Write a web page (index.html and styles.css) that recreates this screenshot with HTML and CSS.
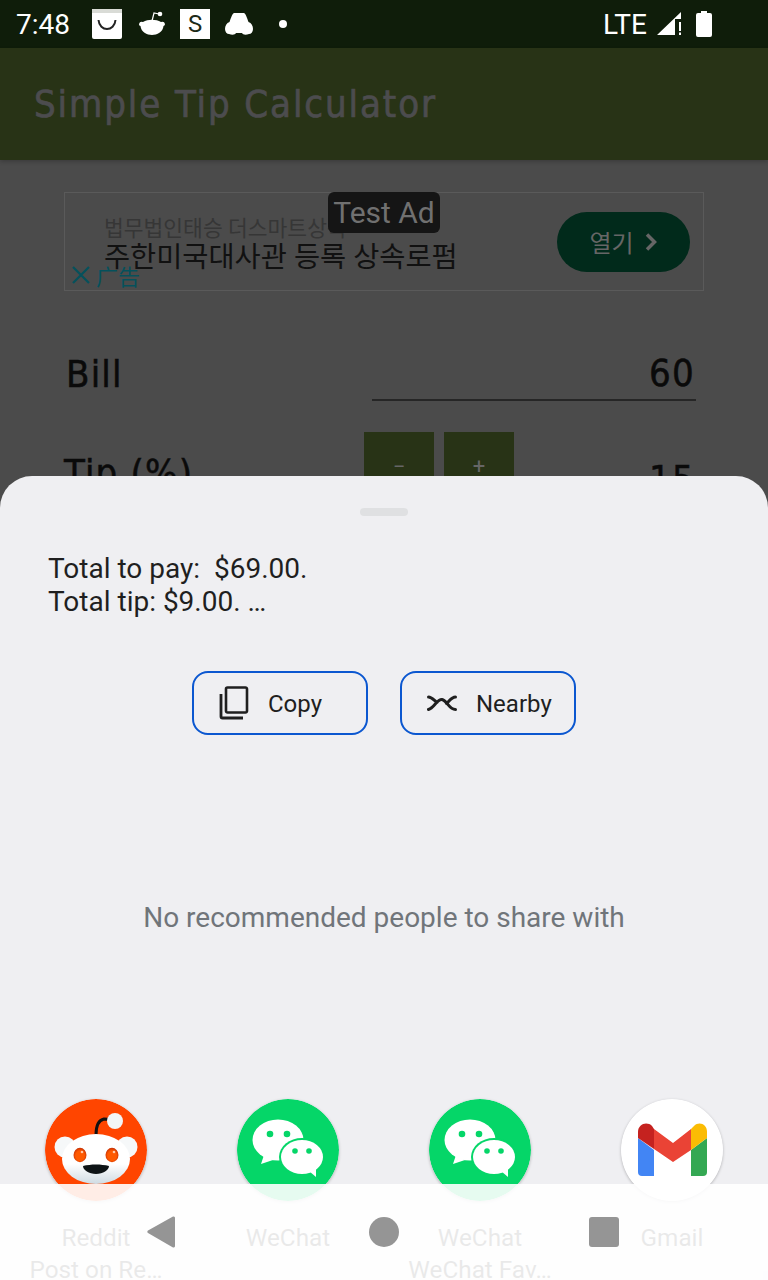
FILE: index.html
```html
<!DOCTYPE html>
<html lang="en">
<head>
  <meta charset="UTF-8">
  <meta name="viewport" content="width=device-width, initial-scale=1.0">
  <title>Simple Tip Calculator</title>
  <link rel="stylesheet" href="styles.css">
</head>
<body>
<div class="screen">

  <div class="status-bar">
    <span class="time">7:48</span>
    <svg class="note-icon" width="30" height="30" viewBox="0 0 30 30">
      <rect width="30" height="30" rx="2" fill="#fff"/>
      <rect width="30" height="4" fill="#d9dbd6"/>
      <path d="M6.500 11c1 12 16 12 17 0" fill="none" stroke="#222" stroke-width="2"/>
    </svg>
    <svg class="note-icon reddit-note" width="28" height="30" viewBox="0 0 28 30">
      <path d="M14 12l2-8 5 1" fill="none" stroke="#fff" stroke-width="1.2"/>
      <circle cx="22" cy="5" r="2.3" fill="#fff"/>
      <path d="M1 15a3 3 0 0 1 4-2c5-3 13-3 18 0a3 3 0 0 1 4 2c0 1-1 2-1.500 2C25 23 19 26 14 26S3 23 2.500 17C1.500 17 1 16 1 15z" fill="#fff"/>
    </svg>
    <span class="s-icon">S</span>
    <svg class="note-icon car-note" width="28" height="24" viewBox="0 0 28 24">
      <path d="M9 1h10c2 1 3 5 4.500 9 3 1 4.500 4 4.500 7 0 3-2 5-4 5-3 1-6 1-7-1h-6c-1 2-4 2-7 1-2 0-4-2-4-5 0-3 1.500-6 4.500-7C6 6 7 2 9 1z" fill="#fff"/>
    </svg>
    <span class="dot"></span>
    <span class="lte">LTE</span>
    <svg class="signal" width="26" height="26" viewBox="0 0 26 26">
      <path d="M0 24L24 1V8H18V24z" fill="#fff"/>
      <path d="M22 11h2v9h-2zM22 21.500h2V24h-2z" fill="#fff"/>
    </svg>
    <svg class="battery" width="16" height="26" viewBox="0 0 16 26">
      <path d="M5 0h6v2h3a2 2 0 0 1 2 2v20a2 2 0 0 1-2 2H2a2 2 0 0 1-2-2V4a2 2 0 0 1 2-2h3z" fill="#fff"/>
    </svg>
  </div>

  <div class="app-bar">Simple Tip Calculator</div>

  <div class="content">
    <div class="ad">
      <div class="ad-text">
        <div class="ad-sub">법무법인태승 더스마트상속</div>
        <div class="ad-title">주한미국대사관 등록 상속로펌</div>
      </div>
      <div class="ad-open">열기
        <svg width="14" height="20" viewBox="0 0 14 20"><path d="M3 2.500L10.500 10 3 17.500" fill="none" stroke="#666" stroke-width="3.500"/></svg>
      </div>
      <span class="ad-badge">Test Ad</span>
      <div class="ad-choice">
        <svg width="18" height="18" viewBox="0 0 18 18"><path d="M1 1l16 16M17 1L1 17" stroke="#05515c" stroke-width="2.200"/></svg>
        <span>广告</span>
      </div>
    </div>

    <div class="row-bill">
      <span class="field-label">Bill</span>
      <span class="field-input">60</span>
    </div>

    <div class="row-tip">
      <span class="field-label tip-label">Tip (%)</span>
      <span class="step-btn">−</span>
      <span class="step-btn">+</span>
      <span class="tip-value">15</span>
    </div>
  </div>

  <div class="sheet">
    <div class="handle"></div>
    <p class="share-text">Total to pay:&nbsp; $69.00.<br>Total tip: $9.00. …</p>

    <div class="actions">
      <div class="action-btn">
        <svg width="30" height="34" viewBox="0 0 30 34">
          <path d="M8.500 1.500h18a1.500 1.500 0 0 1 1.500 1.500v22a1.500 1.500 0 0 1-1.500 1.500h-18A1.500 1.500 0 0 1 7 25V3a1.500 1.500 0 0 1 1.500-1.500z" fill="none" stroke="#1f1f1f" stroke-width="2.600"/>
          <path d="M2 8v22.500A1.500 1.500 0 0 0 3.500 32H24" fill="none" stroke="#1f1f1f" stroke-width="2.800"/>
        </svg>
        <span>Copy</span>
      </div>
      <div class="action-btn">
        <svg width="30" height="18" viewBox="0 0 30 18">
          <path d="M1.500 3C5 3 7 6.500 10 8.500M1.500 15.500C7 14 10 5 15 5.500 20 6.500 22 15.500 28.500 15.500M19.500 9.500C22 8 24 3 28.500 3" fill="none" stroke="#1f1f1f" stroke-width="3" stroke-linecap="round"/>
        </svg>
        <span>Nearby</span>
      </div>
    </div>

    <div class="empty-note">No recommended people to share with</div>

    <div class="targets">
      <div class="target">
        <svg class="target-icon" width="102" height="102" viewBox="0 0 102 102">
          <defs>
            <linearGradient id="faceShade" x1="0" y1="0" x2="0" y2="1">
              <stop offset="0.6" stop-color="#fff"/>
              <stop offset="1" stop-color="#cfdbe2"/>
            </linearGradient>
            <radialGradient id="eyeGlow" cx="0.5" cy="0.55" r="0.6">
              <stop offset="0.55" stop-color="#ff5a00"/>
              <stop offset="1" stop-color="#b92505"/>
            </radialGradient>
          </defs>
          <circle cx="51" cy="51" r="51" fill="#ff4500"/>
          <path d="M51 36c0-9 3-15 8-16 2 0 4 0 5 1" fill="none" stroke="#111" stroke-width="3"/>
          <circle cx="70" cy="22" r="8" fill="#f3f5f7"/>
          <circle cx="20" cy="48" r="10.500" fill="#f6f8f9"/>
          <circle cx="82" cy="48" r="10.500" fill="#f6f8f9"/>
          <ellipse cx="51" cy="60" rx="34" ry="25" fill="url(#faceShade)"/>
          <ellipse cx="35" cy="56" rx="6.500" ry="7.200" fill="url(#eyeGlow)"/>
          <ellipse cx="67" cy="56" rx="6.500" ry="7.200" fill="url(#eyeGlow)"/>
          <circle cx="37" cy="53" r="1.300" fill="#ffc9a8"/>
          <circle cx="69" cy="53" r="1.300" fill="#ffc9a8"/>
          <path d="M38 67c8-2 18-2 26 0 0 4-6 8-13 8s-13-4-13-8z" fill="#0e1416"/>
        </svg>
        <span class="target-name">Reddit</span>
        <span class="target-name">Post on Re…</span>
      </div>
      <div class="target">
        <svg class="target-icon" width="102" height="102" viewBox="0 0 102 102">
          <circle cx="51" cy="51" r="51" fill="#05d668"/>
          <ellipse cx="41" cy="41" rx="25.500" ry="20.500" fill="#fff"/>
          <path d="M27 56l-3 9 12-4z" fill="#fff"/>
          <ellipse cx="65" cy="58" rx="23" ry="19" fill="#05d668"/>
          <ellipse cx="65" cy="58" rx="21" ry="17" fill="#fff"/>
          <path d="M72 72l7 6v-9z" fill="#fff"/>
          <circle cx="33" cy="35" r="3.300" fill="#05d668"/>
          <circle cx="50" cy="35" r="3.300" fill="#05d668"/>
          <circle cx="58" cy="52" r="2.800" fill="#05d668"/>
          <circle cx="72" cy="52" r="2.800" fill="#05d668"/>
        </svg>
        <span class="target-name">WeChat</span>
      </div>
      <div class="target">
        <svg class="target-icon" width="102" height="102" viewBox="0 0 102 102">
          <circle cx="51" cy="51" r="51" fill="#05d668"/>
          <ellipse cx="41" cy="41" rx="25.500" ry="20.500" fill="#fff"/>
          <path d="M27 56l-3 9 12-4z" fill="#fff"/>
          <ellipse cx="65" cy="58" rx="23" ry="19" fill="#05d668"/>
          <ellipse cx="65" cy="58" rx="21" ry="17" fill="#fff"/>
          <path d="M72 72l7 6v-9z" fill="#fff"/>
          <circle cx="33" cy="35" r="3.300" fill="#05d668"/>
          <circle cx="50" cy="35" r="3.300" fill="#05d668"/>
          <circle cx="58" cy="52" r="2.800" fill="#05d668"/>
          <circle cx="72" cy="52" r="2.800" fill="#05d668"/>
        </svg>
        <span class="target-name">WeChat</span>
        <span class="target-name">WeChat Fav…</span>
      </div>
      <div class="target">
        <svg class="target-icon" width="102" height="102" viewBox="0 0 102 102">
          <circle cx="51" cy="51" r="51" fill="#fff"/>
          <path d="M17 39l16 12v26H21a4 4 0 0 1-4-4z" fill="#4285f4"/>
          <path d="M70 51l16-12v34a4 4 0 0 1-4 4H70z" fill="#34a853"/>
          <path d="M33 30l19 14 18-14v21L52 63 33 50z" fill="#ea4335"/>
          <path d="M17 39v-6c0-8 9-11 14-6l2 3v20z" fill="#c5221f"/>
          <path d="M70 30l3-3c5-5 13-2 13 6v6L70 51z" fill="#fbbc04"/>
        </svg>
        <span class="target-name">Gmail</span>
      </div>
    </div>
  </div>

  <div class="nav-bar">
    <svg width="30" height="34" viewBox="0 0 30 34"><path d="M27 1.500a1.500 1.500 0 0 1 2 1.500v28a1.500 1.500 0 0 1-2 1.500L2 18a1.500 1.500 0 0 1 0-2.500z" fill="#959595"/></svg>
    <span class="nav-circle"></span>
    <span class="nav-square"></span>
  </div>

</div>
</body>
</html>
```

FILE: styles.css
```css
body {
  margin: 0;
  font-family: 'Roboto', 'Noto Sans CJK KR', sans-serif;
}
.screen {
  position: relative;
  width: 768px;
  height: 1280px;
  overflow: hidden;
  background-color: #4b4b4b;
}

/* status bar */
.status-bar {
  display: flex;
  align-items: center;
  height: 48px;
  padding-left: 16px;
  padding-right: 56px;
  box-sizing: border-box;
  background-color: #0f1d0a;
  color: #fff;
}
.time {
  font-size: 28px;
  width: 76px;
}
.note-icon {
  flex: none;
}
.reddit-note {
  margin-left: 16px;
}
.s-icon {
  width: 30px;
  height: 30px;
  margin-left: 14px;
  background-color: #fff;
  color: #1c2a18;
  font-size: 24px;
  line-height: 30px;
  text-align: center;
}
.car-note {
  margin-left: 15px;
}
.dot {
  width: 8px;
  height: 8px;
  margin-left: 26px;
  border-radius: 50%;
  background-color: #fff;
}
.lte {
  margin-left: auto;
  font-size: 28px;
}
.signal {
  margin-left: 10px;
}
.battery {
  margin-left: 13px;
}

/* app bar */
.app-bar {
  height: 112px;
  padding-left: 34px;
  box-sizing: border-box;
  background-color: #283316;
  box-shadow: 0 2px 4px rgba(0, 0, 0, 0.2);
  color: #4c4c4e;
  font-family: 'DejaVu Sans Condensed', 'DejaVu Sans', sans-serif;
  font-size: 38px;
  letter-spacing: 1.9px;
  -webkit-text-stroke: 0.7px #4c4c4e;
  line-height: 112px;
}

/* calculator behind the sheet */
.content {
  padding: 32px 64px 0;
}
.ad {
  position: relative;
  display: flex;
  align-items: center;
  justify-content: space-between;
  height: 99px;
  padding: 0 13px 0 39px;
  box-sizing: border-box;
  border: 1px solid #5a5a5a;
}
.ad-text {
  padding-top: 4px;
}
.ad-sub {
  color: #363636;
  font-size: 21.5px;
  line-height: 28px;
}
.ad-title {
  color: #111;
  font-size: 28.4px;
  line-height: 30px;
}
.ad-open {
  display: flex;
  align-items: center;
  justify-content: center;
  gap: 10px;
  width: 133px;
  height: 60px;
  border-radius: 30px;
  background-color: #012a1b;
  color: #666;
  font-size: 24px;
}
.ad-badge {
  position: absolute;
  top: -1px;
  left: 263px;
  width: 112px;
  height: 41px;
  border-radius: 6px;
  background-color: #151515;
  color: #707070;
  font-size: 30px;
  line-height: 41px;
  text-align: center;
}
.ad-choice {
  position: absolute;
  left: 7px;
  bottom: 1px;
  display: flex;
  align-items: center;
  gap: 6px;
  color: #05515c;
  font-family: 'Noto Sans CJK SC', sans-serif;
  font-size: 22px;
  line-height: 28px;
}
.row-bill {
  display: flex;
  align-items: center;
  justify-content: space-between;
  margin-top: 56px;
  margin-right: 8px;
}
.field-label,
.field-input,
.tip-value {
  color: #0a0a0a;
  font-family: 'DejaVu Sans Condensed', 'DejaVu Sans', sans-serif;
  font-size: 38px;
  letter-spacing: 1.2px;
  -webkit-text-stroke: 0.5px #0a0a0a;
}
.field-label {
  margin-left: 2px;
}
.field-input {
  width: 324px;
  height: 54px;
  padding-right: 1px;
  box-sizing: border-box;
  border-bottom: 2px solid #262626;
  line-height: 52px;
  text-align: right;
}
.row-tip {
  display: flex;
  margin-top: 31px;
  margin-right: 8px;
}
.tip-label {
  width: 300px;
  margin-left: 0;
  padding-top: 19px;
}
.step-btn {
  width: 70px;
  height: 70px;
  margin-right: 10px;
  background-color: #283316;
  color: #666;
  font-size: 22px;
  line-height: 70px;
  text-align: center;
}
.tip-value {
  margin-left: auto;
  padding-top: 25px;
  padding-right: 1px;
}

/* share sheet */
.sheet {
  position: absolute;
  top: 476px;
  left: 0;
  right: 0;
  bottom: 0;
  display: flex;
  flex-direction: column;
  border-radius: 32px 32px 0 0;
  background-color: #efeff2;
}
.handle {
  align-self: center;
  width: 48px;
  height: 8px;
  margin-top: 32px;
  border-radius: 4px;
  background-color: #dfe0e2;
}
.share-text {
  margin: 36px 48px 0;
  color: #1f1f1f;
  font-size: 28px;
  line-height: 33px;
}
.actions {
  display: flex;
  justify-content: center;
  gap: 32px;
  margin-top: 53px;
}
.action-btn {
  display: flex;
  align-items: center;
  gap: 19px;
  width: 176px;
  height: 64px;
  padding-left: 25px;
  box-sizing: border-box;
  border: 2px solid #0b57d0;
  border-radius: 16px;
  color: #1f1f1f;
  font-size: 24px;
}
.action-btn span {
  padding-top: 2px;
}
.empty-note {
  display: flex;
  flex: 1;
  align-items: center;
  justify-content: center;
  color: #70757a;
  font-size: 28px;
}
.targets {
  display: grid;
  grid-template-columns: repeat(4, 192px);
  height: 181px;
}
.target {
  display: flex;
  flex-direction: column;
  align-items: center;
  color: #1f1f1f;
  font-size: 24.3px;
  line-height: 32px;
}
.target-icon {
  margin-bottom: 21px;
  border-radius: 50%;
  box-shadow: 0 1px 3px rgba(0, 0, 0, 0.25);
}

/* nav bar lies over the share targets */
.nav-bar {
  position: absolute;
  left: 0;
  right: 0;
  bottom: 0;
  display: flex;
  align-items: center;
  justify-content: space-between;
  height: 96px;
  padding: 0 149px 0 146px;
  box-sizing: border-box;
  background-color: rgba(255, 255, 255, 0.9);
}
.nav-circle {
  width: 30px;
  height: 30px;
  margin-left: 3px;
  border-radius: 50%;
  background-color: #959595;
}
.nav-square {
  width: 30px;
  height: 30px;
  border-radius: 3px;
  background-color: #959595;
}
```
